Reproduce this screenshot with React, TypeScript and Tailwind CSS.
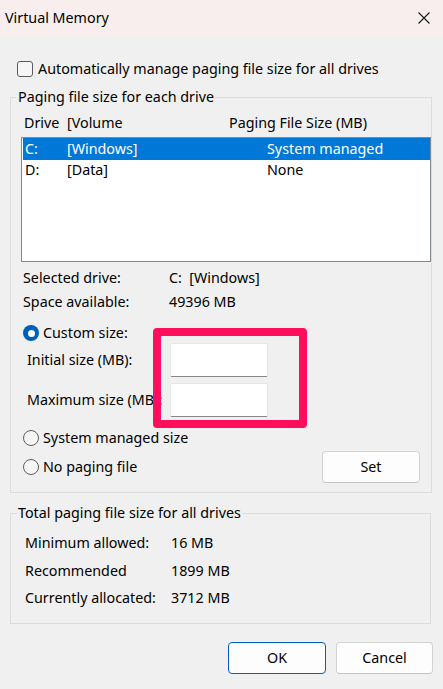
import React from 'react';

const Radio = ({ checked = false }: { checked?: boolean }) =>
  checked ? (
    <span className="w-[16px] h-[16px] rounded-full bg-[#005fb8] flex items-center justify-center shrink-0">
      <span className="w-[7px] h-[7px] rounded-full bg-white" />
    </span>
  ) : (
    <span className="w-[16px] h-[16px] rounded-full border border-[#5d5d5d] bg-[#f6f6f6] shrink-0" />
  );

const Field = () => (
  <div className="w-[98px] h-[34px] bg-white border border-[#e6e6e6] border-b-[#868686] rounded-[2px]" />
);

const App: React.FC = () => {
  return (
    <div
      className="relative w-[443px] h-[689px] bg-[#f0f0f0] overflow-hidden text-[14.3px] text-black"
      style={{ fontFamily: '"Noto Sans", "Open Sans", sans-serif' }}
    >
      {/* Title bar */}
      <div className="h-[36px] bg-[#f9eeee] flex items-center justify-between pl-[5px] pr-[13px]">
        <span className="leading-[20px]">Virtual Memory</span>
        <svg width="12" height="12" viewBox="0 0 12 12">
          <path d="M0.5 0.5 L11.5 11.5 M11.5 0.5 L0.5 11.5" stroke="#1a1a1a" strokeWidth="1.1" />
        </svg>
      </div>

      {/* Auto manage */}
      <div className="mt-[23px] h-[20px] flex items-center pl-[17px] gap-[5px] leading-[20px]">
        <span className="w-[16px] h-[16px] rounded-[3px] border border-[#5d5d5d] bg-[#f6f6f6]" />
        <span>Automatically manage paging file size for all drives</span>
      </div>

      {/* Paging file size for each drive */}
      <fieldset className="mt-[8px] ml-[10px] w-[421px] border border-[#dcdcdc] pb-[9px]">
        <legend className="ml-[6px] px-[1px] leading-[20px]">Paging file size for each drive</legend>

        <div className="mt-[6px] h-[20px] flex items-center pl-[13px] leading-[20px]">
          <span className="w-[43px]">Drive</span>
          <span className="w-[162px]">[Volume</span>
          <span>Paging File Size (MB)</span>
        </div>

        <div className="mt-[4px] ml-[10px] w-[410px] h-[125px] bg-white border border-[#828790]">
          <div className="ml-[1px] h-[22px] bg-[#0078d7] text-white flex items-center pl-[2px]">
            <span className="w-[42px]">C:</span>
            <span className="w-[200px]">[Windows]</span>
            <span>System managed</span>
          </div>
          <div className="h-[20px] flex items-center pl-[3px]">
            <span className="w-[42px]">D:</span>
            <span className="w-[200px]">[Data]</span>
            <span>None</span>
          </div>
        </div>

        <div className="mt-[6px] h-[20px] flex items-center pl-[12px]">
          <span className="w-[146px]">Selected drive:</span>
          <span>C:&nbsp; [Windows]</span>
        </div>
        <div className="mt-[4px] h-[20px] flex items-center pl-[12px]">
          <span className="w-[146px]">Space available:</span>
          <span>49396 MB</span>
        </div>

        <div className="mt-[11px] h-[20px] flex items-center pl-[12px] gap-[4px]">
          <Radio checked />
          <span>Custom size:</span>
        </div>
        <div className="h-[34px] flex items-center pl-[16px]">
          <span className="w-[143px]">Initial size (MB):</span>
          <Field />
        </div>
        <div className="mt-[6px] h-[34px] flex items-center pl-[16px]">
          <span className="w-[143px] overflow-hidden whitespace-nowrap">Maximum size (MB):</span>
          <Field />
        </div>

        <div className="mt-[11px] h-[20px] flex items-center pl-[12px] gap-[4px]">
          <Radio />
          <span>System managed size</span>
        </div>
        <div className="mt-[3px] h-[32px] flex items-center pl-[12px]">
          <div className="flex items-center gap-[4px] w-[299px]">
            <Radio />
            <span>No paging file</span>
          </div>
          <button className="w-[98px] h-[32px] bg-[#fdfdfd] border border-[#d3d3d3] border-b-[#c4c4c4] rounded-[4px]">
            Set
          </button>
        </div>
      </fieldset>

      {/* Total paging file size */}
      <fieldset className="mt-[10px] ml-[10px] w-[421px] border border-[#dcdcdc] pb-[15px]">
        <legend className="ml-[6px] px-[1px] leading-[20px]">Total paging file size for all drives</legend>
        <div className="mt-[10px] h-[20px] flex items-center pl-[14px]">
          <span className="w-[146px]">Minimum allowed:</span>
          <span>16 MB</span>
        </div>
        <div className="mt-[8px] h-[20px] flex items-center pl-[14px]">
          <span className="w-[146px]">Recommended</span>
          <span>1899 MB</span>
        </div>
        <div className="mt-[7px] h-[20px] flex items-center pl-[14px]">
          <span className="w-[146px]">Currently allocated:</span>
          <span>3712 MB</span>
        </div>
      </fieldset>

      {/* Buttons */}
      <div className="mt-[18px] flex justify-end gap-[10px] pr-[10px]">
        <button className="w-[98px] h-[32px] bg-[#fdfdfd] border border-[#005fb8] rounded-[4px]">OK</button>
        <button className="w-[97px] h-[32px] bg-[#fdfdfd] border border-[#d3d3d3] border-b-[#c4c4c4] rounded-[4px]">
          Cancel
        </button>
      </div>

      {/* Highlight annotation */}
      <div className="absolute left-[153px] top-[328px] w-[154px] h-[100px] border-[8px] border-[#ff0f5b] rounded-[4px]" />
    </div>
  );
};

export default App;
